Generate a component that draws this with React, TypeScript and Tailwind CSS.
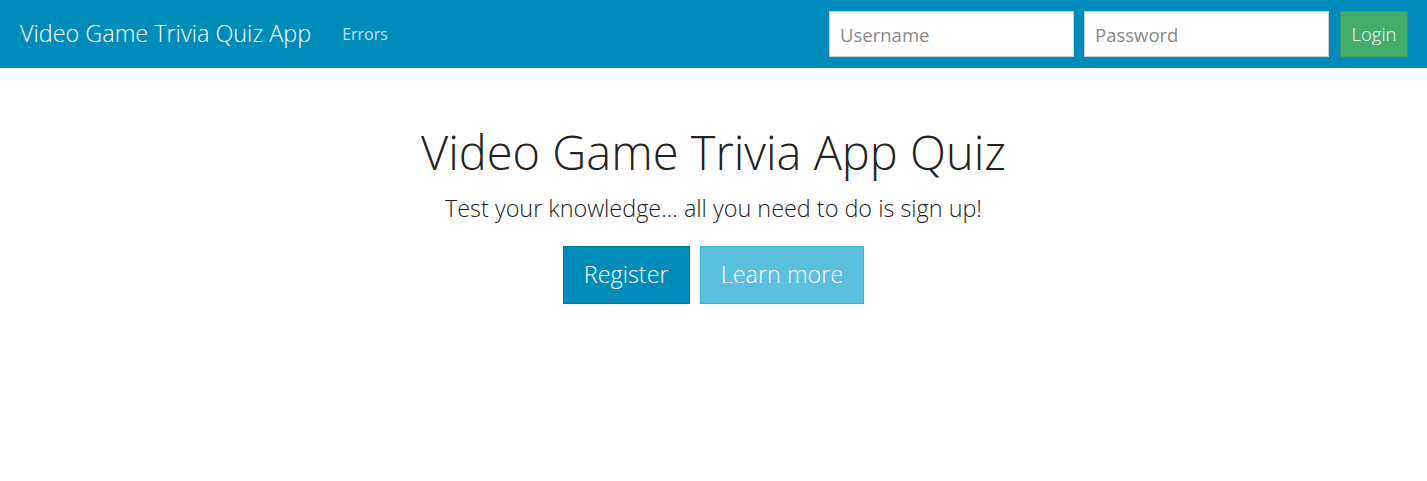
export default function App() {
  return (
    <div className="min-h-[481px] bg-white font-['Open_Sans',sans-serif] text-[#222222]">
      <nav className="flex h-[68px] items-center bg-[#008cba] pl-5 pr-[19px]">
        <span className="text-[23.4px] font-light leading-none text-white">Video Game Trivia Quiz App</span>
        <a className="ml-[31px] text-[16px] text-white/75">Errors</a>
        <form className="ml-auto flex items-center">
          <input
            className="h-[46px] w-[245px] border border-[#cccccc] bg-white px-[10px] text-[18.5px] font-normal text-[#222] placeholder:text-[#888] outline-none"
            placeholder="Username"
          />
          <input
            className="ml-[10px] h-[46px] w-[245px] border border-[#cccccc] bg-white px-[10px] text-[18.5px] font-normal text-[#222] placeholder:text-[#888] outline-none"
            placeholder="Password"
            type="password"
          />
          <button
            type="button"
            className="ml-[11px] h-[46px] w-[68px] border border-[#3c9a5f] bg-[#43ac6a] text-[18.5px] font-light text-white"
          >
            Login
          </button>
        </form>
      </nav>
      <main className="flex flex-col items-center pt-[59px]">
        <h1 className="text-[47px] font-light leading-[1.1]">Video Game Trivia App Quiz</h1>
        <p className="mt-[15px] text-[23.4px] font-light leading-tight">Test your knowledge... all you need to do is sign up!</p>
        <div className="mt-[23px] flex gap-[10px]">
          <button
            type="button"
            className="h-[58px] border border-[#0079a1] bg-[#008cba] px-[20px] text-[23.4px] font-light text-white"
          >
            Register
          </button>
          <button
            type="button"
            className="h-[58px] border border-[#3db5d8] bg-[#5bc0de] px-[20px] text-[23.4px] font-light text-white"
          >
            Learn more
          </button>
        </div>
      </main>
    </div>
  );
}
